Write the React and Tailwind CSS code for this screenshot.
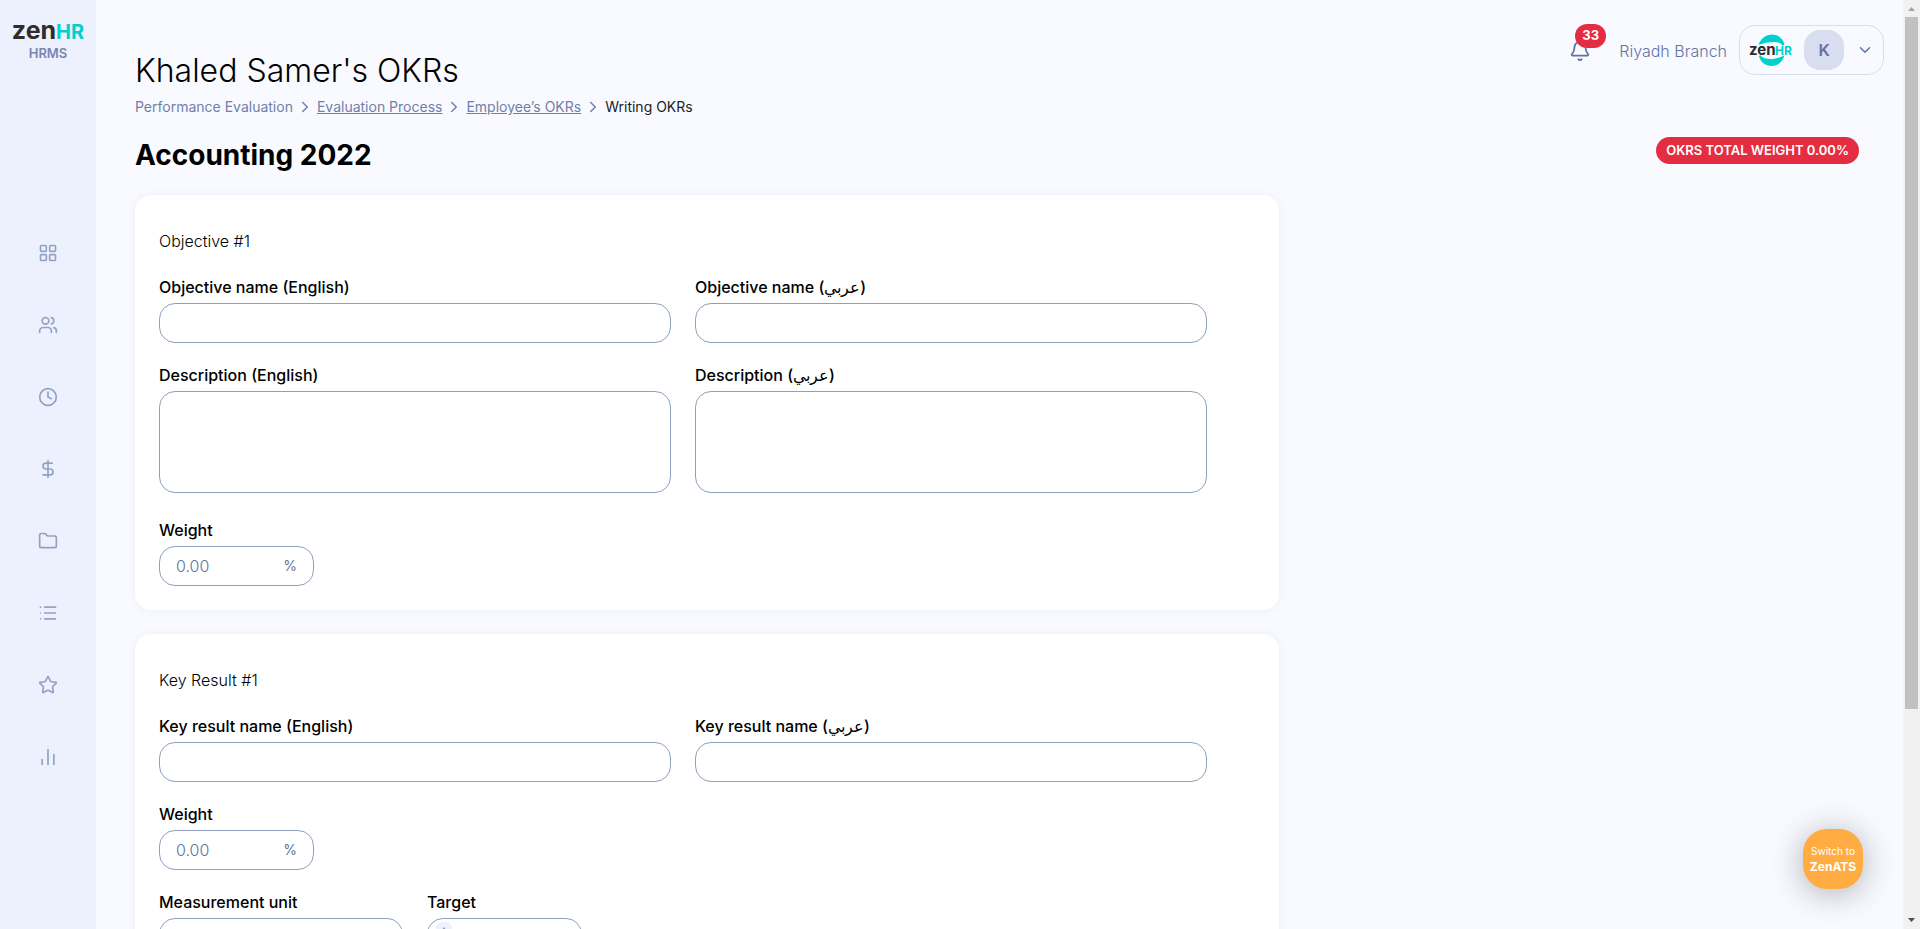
import { LayoutGrid, Users, Clock, DollarSign, Folder, List, Star, BarChart2, Bell, ChevronDown, ChevronRight } from 'lucide-react';

const NAV = [
  { label: 'Dashboard', icon: LayoutGrid },
  { label: 'Employees', icon: Users },
  { label: 'Attendance', icon: Clock },
  { label: 'Payroll', icon: DollarSign },
  { label: 'Documents', icon: Folder },
  { label: 'Requests', icon: List },
  { label: 'Performance', icon: Star },
  { label: 'Reports', icon: BarChart2 },
];

const INPUT = 'block h-10 w-full rounded-2xl border border-[#8f9fc0] bg-white px-4 text-base font-light outline-none';

function Sidebar() {
  return (
    <aside className="flex w-24 shrink-0 flex-col items-center bg-[#edf0fd]">
      <a href="#" className="mt-3 flex h-8 items-baseline font-bold">
        <span className="text-[25px] leading-9 text-[#2d2d2d]">zen</span>
        <span className="text-xl leading-9 text-[#00d1cd]">HR</span>
      </a>
      <span className="text-[13px] leading-[18px] font-semibold text-[#7886b0]">HRMS</span>
      <nav className="mt-[155px] flex flex-col">
        {NAV.map(({ label, icon: Icon }) => (
          <a key={label} href="#" aria-label={label} className="flex h-[72px] items-center text-[#92a2c3]">
            <Icon size={20} strokeWidth={2} />
          </a>
        ))}
      </nav>
    </aside>
  );
}

function CompanyLogo() {
  return (
    <svg width="45" height="34" viewBox="0 0 45 34" role="img" aria-label="ZenHR">
      <path d="M9.500 12C12 5 17 1.500 23 1.500c6 0 10.500 3.500 12.500 9.500l-1.500 2c-2.500-3-5.500-4-9.500-4-5.500 0-9.500 1-15 3z" fill="#00d1cd" />
      <path d="M35.500 22.500C33.500 29 28.500 33 22.500 33 16.500 33 12 29.500 10 23.500l1-1.500c3 3 6.500 4 10.500 4 5.500 0 9-1.500 14-3.500z" fill="#00d1cd" />
      <text x="0" y="21.500" fontSize="15" fontWeight="700" fill="#2d2d2d">zen</text>
      <text x="26" y="21.500" fontSize="12" fontWeight="700" fill="#00d1cd">HR</text>
    </svg>
  );
}

function UserBar() {
  return (
    <div className="flex items-center">
      <button type="button" aria-label="Notifications" className="relative mt-0.5 mr-7 text-[#5f73a6]">
        <Bell size={22} strokeWidth={2} />
        <span className="absolute -top-4 left-1.5 flex h-6 items-center rounded-full bg-[#e52d42] px-[7px] text-[13px] font-bold text-white">33</span>
      </button>
      <span className="mt-0.5 mr-3 text-base font-light text-[#5f73a6]">Riyadh Branch</span>
      <button type="button" className="flex h-[50px] items-center rounded-2xl border border-[#d8def0] pr-[9px] pl-[9px]">
        <CompanyLogo />
        <span className="ml-2.5 flex size-10 items-center justify-center rounded-2xl bg-[#d8def0] text-base font-semibold text-[#5f73a6]">K</span>
        <ChevronDown size={18} strokeWidth={2} className="ml-3 text-[#5f73a6]" />
      </button>
    </div>
  );
}

function Breadcrumbs() {
  return (
    <nav className="flex h-6 items-center gap-[3px] text-sm text-[#7180aa]">
      <span>Performance Evaluation</span>
      <ChevronRight size={18} strokeWidth={2} />
      <a href="#" className="underline">Evaluation Process</a>
      <ChevronRight size={18} strokeWidth={2} />
      <a href="#" className="underline">Employee’s OKRs</a>
      <ChevronRight size={18} strokeWidth={2} />
      <span className="text-[#222]">Writing OKRs</span>
    </nav>
  );
}

function Field({ id, label, className, children }) {
  return (
    <div className={className}>
      <label htmlFor={id} className="mb-1 block h-6 text-base leading-6 font-medium">{label}</label>
      {children}
    </div>
  );
}

function WeightField({ id }) {
  return (
    <Field id={id} label="Weight" className="w-[155px]">
      <div className="flex h-10 items-center rounded-2xl border border-[#8f9fc0] px-4 text-[#5f73a0]">
        <input id={id} type="text" placeholder="0.00" className="w-full min-w-0 text-base font-light outline-none placeholder:text-[#5f73a0]" />
        <span className="text-sm">%</span>
      </div>
    </Field>
  );
}

function Card({ title, children }) {
  return (
    <section className="flex max-w-[1144px] flex-col gap-5 rounded-2xl bg-white p-6 pt-[34px] pr-[72px] shadow-[0_0_8px_rgba(50,70,120,0.06)]">
      <h3 className="mb-[2px] h-6 text-base leading-6 font-light">{title}</h3>
      {children}
    </section>
  );
}

function OkrForm() {
  return (
    <form className="mt-5 flex flex-col gap-6">
      <Card title="Objective #1">
        <div className="grid grid-cols-2 gap-6">
          <Field id="obj-en" label="Objective name (English)">
            <input id="obj-en" type="text" className={INPUT} />
          </Field>
          <Field id="obj-ar" label="Objective name (عربي)">
            <input id="obj-ar" type="text" dir="rtl" className={INPUT} />
          </Field>
        </div>
        <div className="mb-[5px] grid grid-cols-2 gap-6">
          <Field id="desc-en" label="Description (English)">
            <textarea id="desc-en" className="block h-[102px] w-full resize-none rounded-2xl border border-[#8f9fc0] px-4 py-2 font-light outline-none" />
          </Field>
          <Field id="desc-ar" label="Description (عربي)">
            <textarea id="desc-ar" dir="rtl" className="block h-[102px] w-full resize-none rounded-2xl border border-[#8f9fc0] px-4 py-2 font-light outline-none" />
          </Field>
        </div>
        <WeightField id="obj-weight" />
      </Card>

      <Card title="Key Result #1">
        <div className="grid grid-cols-2 gap-6">
          <Field id="kr-en" label="Key result name (English)">
            <input id="kr-en" type="text" className={INPUT} />
          </Field>
          <Field id="kr-ar" label="Key result name (عربي)">
            <input id="kr-ar" type="text" dir="rtl" className={INPUT} />
          </Field>
        </div>
        <WeightField id="kr-weight" />
        <div className="flex gap-6">
          <Field id="kr-unit" label="Measurement unit" className="w-[244px]">
            <select id="kr-unit" className={`${INPUT} appearance-none`} />
          </Field>
          <Field id="kr-target" label="Target" className="w-[155px]">
            <div className="flex h-10 items-start rounded-2xl border border-[#8f9fc0] px-2 pt-[3px]">
              <span className="flex h-8 w-4 shrink-0 justify-center rounded-md bg-[#edf0fd] pt-[5px] text-[#92a2c3]">
                <svg width="6" height="4" viewBox="0 0 6 4" fill="currentColor"><path d="M3 0l3 4H0z" /></svg>
              </span>
              <input id="kr-target" type="text" className="w-full min-w-0 px-2 outline-none" />
            </div>
          </Field>
        </div>
      </Card>
    </form>
  );
}

// Classic 17px track with arrow buttons at both ends
function ScrollTrack() {
  return (
    <div aria-hidden="true" className="flex w-[17px] shrink-0 flex-col items-center bg-[#f1f1f1]">
      <svg width="17" height="17" viewBox="0 0 17 17" fill="#a3a3a3"><path d="M5 11l3.500-4 3.500 4z" /></svg>
      <div className="w-[13px] basis-[74.5%] bg-[#c1c1c1]" />
      <svg className="mt-auto" width="17" height="17" viewBox="0 0 17 17" fill="#505050"><path d="M5 6l3.500 4L12 6z" /></svg>
    </div>
  );
}

export default function App() {
  return (
    <div className="relative flex h-screen overflow-hidden bg-[#f9faff] font-['Inter',sans-serif] text-black">
      <Sidebar />
      <main className="min-w-0 flex-1 overflow-hidden pt-[25px] pl-[39px]">
        <header className="flex items-start justify-between pr-[19px]">
          <div className="pt-[26px]">
            <h1 className="text-[32px] leading-10 font-light">Khaled Samer's OKRs</h1>
            <div className="mt-1"><Breadcrumbs /></div>
          </div>
          <UserBar />
        </header>
        <div className="mt-4 flex h-10 items-start justify-between pr-11">
          <h2 className="text-[28px] leading-10 font-bold">Accounting 2022</h2>
          <span className="mt-0.5 flex h-[27px] items-center rounded-full bg-[#e52d42] px-2.5 text-[13px] font-semibold text-white">OKRS TOTAL WEIGHT 0.00%</span>
        </div>
        <OkrForm />
      </main>
      <ScrollTrack />
      <button type="button" className="absolute right-[57px] bottom-10 flex size-[60px] flex-col items-center justify-center rounded-3xl bg-[#ffac42] text-white shadow-[0_4px_32px_rgba(0,0,0,0.3)]">
        <span className="text-[10px] leading-4">Switch to</span>
        <span className="text-xs leading-4 font-bold">ZenATS</span>
      </button>
    </div>
  );
}
